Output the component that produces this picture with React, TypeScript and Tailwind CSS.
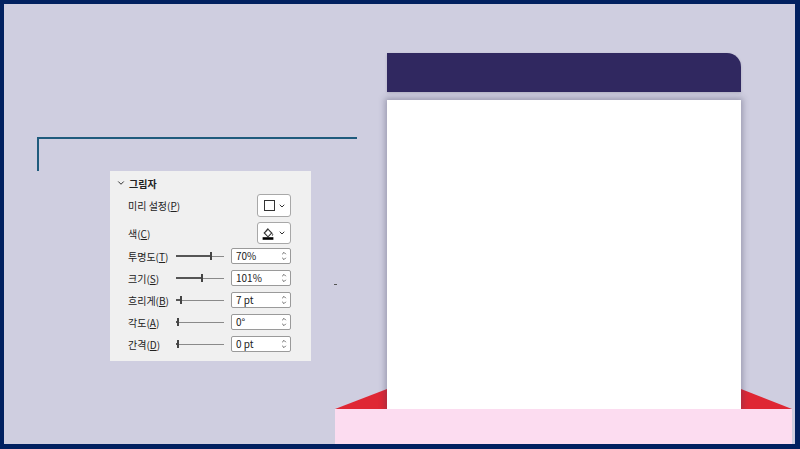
import { ChevronDown } from "lucide-react"

const font = { fontFamily: '"Noto Sans CJK KR", "Noto Sans", sans-serif' }

function Key({ k }: { k: string }) {
  return (
    <span>
      (<span className="underline underline-offset-1">{k}</span>)
    </span>
  )
}

function Spinner() {
  return (
    <svg width="6" height="12" viewBox="0 0 6 12" className="shrink-0">
      <path d="M1.2 4.2 L3 2.4 L4.8 4.2" fill="none" stroke="#555" strokeWidth="0.9" />
      <path d="M1.2 7.8 L3 9.6 L4.8 7.8" fill="none" stroke="#555" strokeWidth="0.9" />
    </svg>
  )
}

function Slider({ pos }: { pos: number }) {
  return (
    <div className="relative h-[10px] w-[48px]">
      <div className="absolute left-0 right-0 top-[4.5px] h-px bg-[#8a8a8a]" />
      <div
        className="absolute left-0 top-[4.2px] h-[1.4px] bg-[#555]"
        style={{ width: pos }}
      />
      <div
        className="absolute top-px h-[8px] w-[1.5px] bg-[#444]"
        style={{ left: pos }}
      />
    </div>
  )
}

function SpinRow({ label, k, value, pos }: { label: string; k: string; value: string; pos: number }) {
  return (
    <div className="flex h-[22px] items-center pl-[18px]">
      <div className="w-[48px] whitespace-nowrap text-[10px] text-[#222]">
        {label}
        <Key k={k} />
      </div>
      <Slider pos={pos} />
      <div className="ml-[7px] flex h-[16px] w-[60px] items-center justify-between rounded-[2px] border border-[#9a9a9a] bg-white pl-[4px] pr-[3px]">
        <span className="text-[10px] leading-none text-[#222]">{value}</span>
        <Spinner />
      </div>
    </div>
  )
}

function DropButton({ children }: { children: React.ReactNode }) {
  return (
    <div className="flex h-full w-[34px] items-center justify-end gap-[3px] rounded-[3px] border border-[#a8a8a8] bg-white pr-[4px]">
      {children}
      <ChevronDown size={8} strokeWidth={3} color="#333" />
    </div>
  )
}

function ShadowPanel() {
  return (
    <div className="absolute left-[106px] top-[167px] flex h-[190px] w-[201px] flex-col bg-[#f0f0f0] pt-[2px]" style={font}>
      <div className="flex h-[20px] items-center gap-[3px] pl-[6px]">
        <ChevronDown size={10} strokeWidth={2.4} color="#333" />
        <span className="text-[10px] font-bold text-[#222]">그림자</span>
      </div>

      <div className="mt-px flex h-[23px] items-center justify-between pl-[18px] pr-[20px]">
        <span className="text-[10px] text-[#222]">
          미리 설정<Key k="P" />
        </span>
        <DropButton>
          <div className="h-[11px] w-[11px] border border-[#333] bg-white" />
        </DropButton>
      </div>

      <div className="mt-[5px] flex h-[22px] items-center justify-between pl-[18px] pr-[20px]">
        <span className="text-[10px] text-[#222]">
          색<Key k="C" />
        </span>
        <DropButton>
          <svg width="14" height="14" viewBox="0 0 13 13">
            <path d="M3 6.5 L6.5 3 L10 6.5 L6.5 10 Z" fill="#fff" stroke="#333" strokeWidth="1" />
            <path d="M4.6 4.9 L6.5 2.3" stroke="#333" strokeWidth="1" />
            <path d="M10.4 6.9 Q11.4 8.3 10.5 9" fill="none" stroke="#333" strokeWidth="0.9" />
            <rect x="1.5" y="10.4" width="10" height="2.4" fill="#000" />
          </svg>
        </DropButton>
      </div>

      <div className="mt-px">
        <SpinRow label="투명도" k="T" value="70%" pos={34} />
        <SpinRow label="크기" k="S" value="101%" pos={25} />
        <SpinRow label="흐리게" k="B" value="7 pt" pos={4} />
        <SpinRow label="각도" k="A" value="0°" pos={1} />
        <SpinRow label="간격" k="D" value="0 pt" pos={1} />
      </div>
    </div>
  )
}

export default function App() {
  return (
    <div className="relative box-border h-[449px] w-[800px] overflow-hidden border-b-[5px] border-l-4 border-r-[5px] border-t-4 border-[#012060] bg-[#cfcee0]">
      {/* bracket line */}
      <div className="absolute left-[33px] top-[133px] h-[34px] w-[320px] border-l-2 border-t-2 border-[#1f5b7d]" />

      <ShadowPanel />

      <div className="absolute left-[330px] top-[280px] h-px w-[3px] bg-[#555]" />

      {/* red side flaps */}
      <svg className="absolute left-[331px] top-[385px]" width="52" height="20" viewBox="0 0 52 20">
        <polygon points="52,0 52,20 0,20" fill="#df2734" />
      </svg>
      <svg className="absolute left-[737px] top-[385px]" width="51" height="20" viewBox="0 0 51 20">
        <polygon points="0,0 51,20 0,20" fill="#df2734" />
      </svg>

      {/* header tab */}
      <div className="absolute left-[383px] top-[49px] h-[39px] w-[354px] rounded-tr-[14px] bg-[#302860] shadow-[0_1px_3px_rgba(0,0,0,0.15)]" />

      {/* white card */}
      <div className="absolute left-[383px] top-[96px] h-[309px] w-[354px] bg-white shadow-[0_0_6px_2px_rgba(60,60,90,0.35)]" />

      {/* pink base */}
      <div className="absolute left-[331px] top-[405px] h-[35px] w-[457px] bg-[#fcdcf0]" />
    </div>
  )
}
